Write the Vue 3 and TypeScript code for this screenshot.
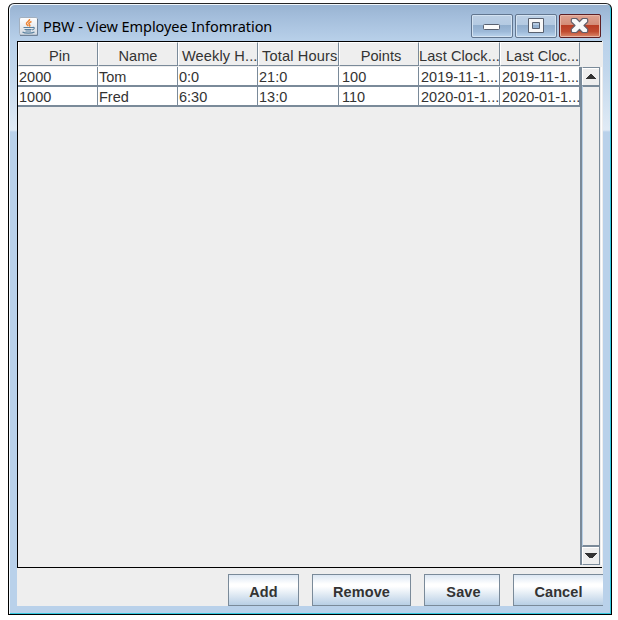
<script setup lang="ts">
interface Column {
  key: string
  label: string
}

const columns: Column[] = [
  { key: 'pin', label: 'Pin' },
  { key: 'name', label: 'Name' },
  { key: 'weekly', label: 'Weekly H...' },
  { key: 'total', label: 'Total Hours' },
  { key: 'points', label: 'Points' },
  { key: 'clock-in', label: 'Last Clock...' },
  { key: 'clock-out', label: 'Last Cloc...' },
]

const rows: string[][] = [
  ['2000', 'Tom', '0:0', '21:0', '100', '2019-11-1...', '2019-11-1...'],
  ['1000', 'Fred', '6:30', '13:0', '110', '2020-01-1...', '2020-01-1...'],
]

const actions: string[] = ['Add', 'Remove', 'Save', 'Cancel']
</script>

<template>
  <div class="desktop">
    <div class="window">
      <header class="titlebar">
        <svg class="app-icon" viewBox="0 0 20 20" width="20" height="20">
          <defs>
            <linearGradient id="tile" x1="0" y1="0" x2="0" y2="1">
              <stop offset="0" stop-color="#ffffff" />
              <stop offset="1" stop-color="#d3dae2" />
            </linearGradient>
          </defs>
          <rect x=".5" y=".5" width="18" height="17.5" rx="1.5" fill="url(#tile)" stroke="#a3b0bf" />
          <path d="M1 18.500h17.500V2" fill="none" stroke="#6f8298" />
          <path d="M10.500 2c1 2-4 3-3 5 .3.8 1.300 1.200 1.800 2.200M12.500 4.500c-2.500 1-3.500 2-2 3.200.7.7.3 1.300-.3 1.800" fill="none" stroke="#ee8535" stroke-width="1.500" />
          <path d="M4.500 10.500h9M5.500 12.500h7M6.500 14h5.500M13.500 10.500c2.500-.5 2.500 1.500-.5 2.500M3.500 15c2 1.500 9.500 1.500 12 0" fill="none" stroke="#58809f" stroke-width="1.100" />
        </svg>
        <h1 class="title">PBW - View Employee Infomration</h1>
        <div class="controls">
          <button class="control" aria-label="Minimize">
            <svg width="40" height="22" viewBox="0 0 40 22">
              <rect x="11.500" y="9.500" width="16" height="5" rx="1" fill="#fbfbfb" stroke="#596170" />
            </svg>
          </button>
          <button class="control" aria-label="Maximize">
            <svg width="40" height="22" viewBox="0 0 40 22">
              <path d="M12.500 3.500h15v14h-15zM16.500 7.500v6h7v-6z" fill="#f8f8f8" fill-rule="evenodd" stroke="#596170" stroke-linejoin="round" />
            </svg>
          </button>
          <button class="control close" aria-label="Close">
            <svg width="40" height="22" viewBox="0 0 40 22">
              <path d="M12 3.500h4.500l3 3.200 3-3.200H27l.7 1.300v2L24 10.500l3.700 3.700v2l-.7 1.300h-4.500l-3-3.200-3 3.200H12l-.7-1.300v-2l3.700-3.700-3.700-3.700v-2z" fill="#f8f8f8" stroke="#625f6b" stroke-width="1.200" stroke-linejoin="round" />
            </svg>
          </button>
        </div>
      </header>

      <main class="content">
        <section class="pane">
          <div class="header-row">
            <div v-for="c in columns" :key="c.key" class="head" :class="c.key">{{ c.label }}</div>
          </div>
          <div class="body">
            <div class="view">
              <div v-for="(row, r) in rows" :key="r" class="row">
                <div v-for="(cell, i) in row" :key="i" class="cell" :class="columns[i].key">{{ cell }}</div>
              </div>
            </div>
            <div class="scrollbar">
              <div class="arrow up">
                <svg width="10" height="5" viewBox="0 0 10 5"><path d="M4 0h2v1h1v1h1v1h1v1h1v1H0V4h1V3h1V2h1V1h1z" fill="#333" /></svg>
              </div>
              <div class="thumb"></div>
              <div class="arrow down">
                <svg width="12" height="5" viewBox="0 0 12 5"><path d="M4 5h4V4h1V3h1V2h1V1h1V0H0v1h1v1h1v1h1v1h1z" fill="#333" /></svg>
              </div>
            </div>
          </div>
        </section>
        <footer class="actions">
          <button v-for="a in actions" :key="a" class="action" :class="a.toLowerCase()">{{ a }}</button>
        </footer>
      </main>
    </div>
  </div>
</template>

<style>
body {
  background: #fff;
}
</style>

<style scoped>
* {
  box-sizing: border-box;
}
.desktop {
  width: 618px;
  height: 620px;
  padding: 3px 0 0 8px;
  overflow: hidden;
  font-family: "Liberation Sans", Arial, sans-serif;
}
.window {
  width: 604px;
  height: 612px;
  padding: 0 8px 7px;
  border: 1px solid #000;
  border-top-color: #252525;
  border-radius: 6px 6px 0 0;
  background: linear-gradient(#98b3d1 0, #a3bddb 12px, #b9d1ea 38px, #c2d7ec 68px, #dfeaf5 124px, #dfeaf5 126px, #b9d1ea 128px);
  box-shadow: inset 1px 1px 0 #f2f8fd, inset -1px -1px 0 #32c8df;
}
.titlebar {
  display: flex;
  height: 37px;
  padding-left: 2px;
}
.app-icon {
  flex: none;
  margin-top: 13px;
}
.title {
  margin: 11px 0 0 4px;
  font: 400 14.500px/22px "Noto Sans", "Open Sans", sans-serif;
  letter-spacing: -0.070px;
  white-space: nowrap;
  color: #000;
}
.controls {
  display: flex;
  gap: 2px;
  margin: 10px 2px 0 auto;
}
.control {
  width: 42px;
  height: 24px;
  padding: 0;
  border: 1px solid #62768f;
  border-radius: 2px;
  background: linear-gradient(#bdd0e5 0, #b4cae2 46%, #91aecd 46%, #9db9d8 75%, #bbd5ee);
  box-shadow: inset 0 0 0 1px #d4e3f2;
}
.control svg {
  display: block;
}
.close {
  border-color: #5d1f25;
  background: linear-gradient(#dfa392 0, #d38b76 46%, #b93c23 46%, #c14b30 75%, #db896c);
  box-shadow: inset 0 0 0 1px #e8b6a5;
}
.content {
  width: 586px;
  height: 565px;
  background: #eee;
  overflow: hidden;
}
.pane {
  width: 585px;
  height: 527px;
  border: solid #000;
  border-width: 1px 0 1px 1px;
}
.header-row {
  display: flex;
  height: 25px;
}
.head {
  height: 24px;
  flex: none;
  border: 1px solid #7a8a99;
  border-top-color: #fff;
  border-left-color: #fff;
  font-size: 14.600px;
  line-height: 26px;
  text-align: center;
  white-space: nowrap;
  color: #333;
}
.head.pin {
  padding-left: 3px;
}
.head.weekly {
  padding-left: 3px;
  text-align: left;
  letter-spacing: 0.100px;
}
.head.clock-out {
  padding-left: 5px;
  text-align: left;
}
.head.total {
  padding-left: 3px;
  text-align: left;
  letter-spacing: 0.150px;
}
.head.clock-in {
  text-align: left;
  text-indent: -1px;
  letter-spacing: 0.050px;
}
.head.points {
  padding-left: 4px;
}
.pin,
.name,
.weekly {
  width: 80px;
}
.total,
.clock-in {
  width: 81px;
}
.points,
.clock-out {
  width: 80px;
}
.body {
  display: flex;
  height: 500px;
}
.view {
  width: 562px;
  background: #eee;
}
.row {
  display: flex;
  height: 20px;
  background: #fff;
  border-bottom: 2px solid #7a8a99;
}
.cell {
  flex: none;
  height: 18px;
  padding-left: 1px;
  border-right: 1px solid #7a8a99;
  font-size: 14.500px;
  line-height: 20px;
  white-space: nowrap;
  color: #333;
}
.cell.points {
  padding-left: 3px;
}
.cell.clock-in,
.cell.clock-out {
  padding-left: 2px;
}
.scrollbar {
  display: flex;
  flex-direction: column;
  width: 22px;
  height: 498px;
  border-left: 2px solid #7a8a99;
  background: linear-gradient(90deg, #eee 19px, #fff 19px);
}
.arrow {
  display: flex;
  align-items: center;
  justify-content: center;
  width: 18px;
  height: 18px;
  background: #eee;
  border: 1px solid #7a8a99;
  border-left-color: #fff;
  border-bottom: 0;
  box-shadow: inset 0 1px 0 #fff;
}
.thumb {
  flex: 1;
  width: 18px;
  border: 1px solid #7a8a99;
  border-width: 2px 1px 2px 1px;
  border-left-color: #b8cfe5;
  background: #eee;
}
.arrow.down {
  border-top: 0;
  border-bottom: 1px solid #7a8a99;
}
.actions {
  display: flex;
  height: 38px;
  padding: 6px 0 0 211px;
}
.action {
  flex: none;
  height: 32px;
  padding: 3px 0 0;
  border: 1px solid #7a8a99;
  background: linear-gradient(#dce7f3 0, #fff 30%, #fff 38%, #b8cfe5);
  font: 700 14.500px/18px "Liberation Sans", Arial, sans-serif;
  letter-spacing: 0.100px;
  color: #333;
}
.add {
  width: 71px;
  margin-right: 13px;
}
.remove {
  width: 99px;
  margin-right: 13px;
}
.save {
  width: 76px;
  margin-right: 13px;
  padding-left: 3px;
}
.cancel {
  width: 91px;
}
</style>
